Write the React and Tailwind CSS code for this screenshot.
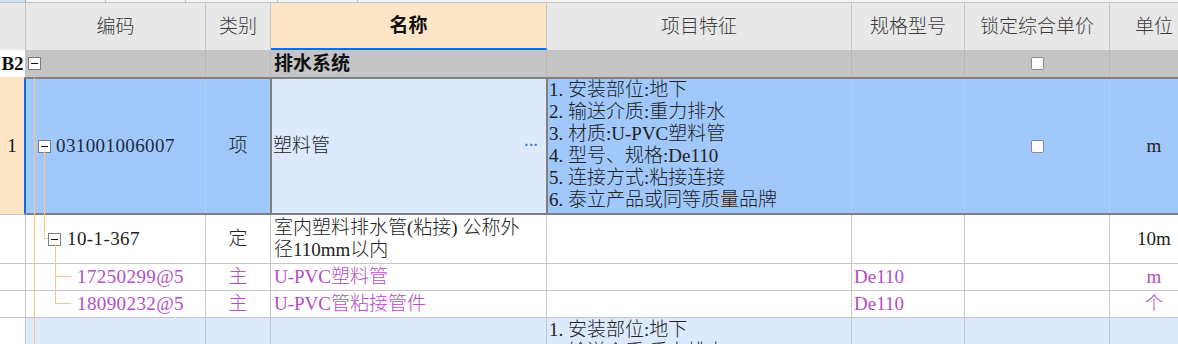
const Minus = () => (
  <span className="flex h-[13px] w-[13px] shrink-0 items-center justify-center border border-[#7c7c7c] bg-white">
    <span className="h-px w-[7px] bg-[#111]" />
  </span>
);

const Check = () => (
  <span className="block h-[13px] w-[13px] rounded-[2px] border border-[#8a8a8a] bg-white" />
);

export default function App() {
  return (
    <div className="relative h-[344px] w-[1178px] overflow-hidden bg-white text-[19px] font-light leading-[22px] text-[#222] font-[family-name:'Liberation_Serif','Noto_Sans_CJK_SC',serif]">
      {/* top strip */}
      <div className="flex h-[3px] border-b border-[#c4c4c4] bg-[#f3f3f3]">
        <div className="w-[26px] border-r border-[#9a9a9a] bg-[#cfe2fa]" />
        <div className="w-[80px] border-r border-[#b8b8b8]" />
        <div className="w-[80px] border-r border-[#b8b8b8]" />
        <div className="w-[92px] border-r border-[#b8b8b8]" />
        <div className="w-[80px] border-r border-[#b8b8b8]" />
      </div>

      {/* header */}
      <div className="flex h-[47px] bg-[#e8e8e8] text-[#3c3c3c]">
        <div className="w-[26px] shrink-0 border-r border-[#c6c6c6]" />
        <div className="flex w-[180px] shrink-0 items-center justify-center border-r border-[#c6c6c6]">编码</div>
        <div className="flex w-[65px] shrink-0 items-center justify-center border-r border-[#c6c6c6]">类别</div>
        <div className="flex w-[276px] shrink-0 items-center justify-center border-r border-b-2 border-r-[#c6c6c6] border-b-[#1169f0] bg-[#fde6c8] font-bold text-[#111]">名称</div>
        <div className="flex w-[305px] shrink-0 items-center justify-center border-r border-[#c6c6c6]">项目特征</div>
        <div className="flex w-[113px] shrink-0 items-center justify-center border-r border-[#c6c6c6]">规格型号</div>
        <div className="flex w-[145px] shrink-0 items-center justify-center border-r border-[#c6c6c6]">锁定综合单价</div>
        <div className="flex w-[88px] shrink-0 items-center justify-center">单位</div>
      </div>

      {/* group row */}
      <div className="flex h-[27px] bg-[#c4c4c4]">
        <div className="flex w-[26px] shrink-0 items-center justify-center border-r border-[#c6c6c6] bg-white font-bold text-[#111]">B2</div>
        <div className="flex w-[180px] shrink-0 items-center border-r border-[#b9b9b9] pl-[2px]"><Minus /></div>
        <div className="w-[65px] shrink-0 border-r border-[#b9b9b9]" />
        <div className="flex w-[276px] shrink-0 items-center border-r border-[#b9b9b9] pl-[3px] font-bold text-[#111]">排水系统</div>
        <div className="w-[305px] shrink-0 border-r border-[#b9b9b9]" />
        <div className="w-[113px] shrink-0 border-r border-[#b9b9b9]" />
        <div className="flex w-[145px] shrink-0 items-center justify-center border-r border-[#b9b9b9]"><Check /></div>
        <div className="w-[88px] shrink-0" />
      </div>

      {/* row 1 (selected) */}
      <div className="flex h-[138px]">
        <div className="flex w-[24px] shrink-0 items-center justify-center border-b border-[#c6c6c6] bg-[#fde6c8] text-[#111]">1</div>
        <div className="flex border-y-2 border-[#808080] bg-[#a0c8fb]">
          <div className="flex w-[182px] shrink-0 items-center gap-[5px] border-r border-l-2 border-r-[#b7cbe6] border-l-[#1169f0] pl-[12px] text-[#1e2a3c]">
            <Minus />
            <span className="tracking-[0.4px]">031001006007</span>
          </div>
          <div className="flex w-[64px] shrink-0 items-center justify-center">项</div>
          <div className="flex w-[278px] shrink-0 items-center justify-between border-x-2 border-[#808080] bg-[#dde9fd] pl-[1px] pr-[8px]">
            <span>塑料管</span>
            <span className="text-[14px] font-bold text-[#3a7bd5]">···</span>
          </div>
          <div className="w-[304px] shrink-0 border-r border-[#b7cbe6] pl-[1px]">
            <div>1. 安装部位:地下</div>
            <div>2. 输送介质:重力排水</div>
            <div>3. 材质:U-PVC塑料管</div>
            <div>4. 型号、规格:De110</div>
            <div>5. 连接方式:粘接连接</div>
            <div>6. 泰立产品或同等质量品牌</div>
          </div>
          <div className="w-[113px] shrink-0 border-r border-[#b7cbe6]" />
          <div className="flex w-[145px] shrink-0 items-center justify-center border-r border-[#b7cbe6]"><Check /></div>
          <div className="flex w-[88px] shrink-0 items-center justify-center">m</div>
        </div>
      </div>

      {/* row 2 */}
      <div className="flex h-[49px] border-b border-[#c6c6c6]">
        <div className="w-[26px] shrink-0 border-r border-[#c6c6c6]" />
        <div className="flex w-[180px] shrink-0 items-center gap-[6px] border-r border-[#c6c6c6] pl-[22px]">
          <Minus />
          <span className="tracking-[0.4px]">10-1-367</span>
        </div>
        <div className="flex w-[65px] shrink-0 items-center justify-center border-r border-[#c6c6c6]">定</div>
        <div className="flex w-[276px] shrink-0 flex-col justify-center border-r border-[#c6c6c6] pl-[3px]">
          <div>室内塑料排水管(粘接) 公称外</div>
          <div>径110mm以内</div>
        </div>
        <div className="w-[305px] shrink-0 border-r border-[#c6c6c6]" />
        <div className="w-[113px] shrink-0 border-r border-[#c6c6c6]" />
        <div className="w-[145px] shrink-0 border-r border-[#c6c6c6]" />
        <div className="flex w-[88px] shrink-0 items-center justify-center">10m</div>
      </div>

      {/* resource rows */}
      {[
        ['17250299@5', 'U-PVC塑料管', 'm'],
        ['18090232@5', 'U-PVC管粘接管件', '个'],
      ].map(([code, name, unit]) => (
        <div key={code} className="flex h-[27px] border-b border-[#c6c6c6] text-[#b64cc6]">
          <div className="w-[26px] shrink-0 border-r border-[#c6c6c6]" />
          <div className="flex w-[180px] shrink-0 items-center border-r border-[#c6c6c6] pl-[51px] tracking-[0.4px]">{code}</div>
          <div className="flex w-[65px] shrink-0 items-center justify-center border-r border-[#c6c6c6]">主</div>
          <div className="flex w-[276px] shrink-0 items-center border-r border-[#c6c6c6] pl-[3px]">{name}</div>
          <div className="w-[305px] shrink-0 border-r border-[#c6c6c6]" />
          <div className="flex w-[113px] shrink-0 items-center border-r border-[#c6c6c6] pl-[2px]">De110</div>
          <div className="w-[145px] shrink-0 border-r border-[#c6c6c6]" />
          <div className="flex w-[88px] shrink-0 items-center justify-center">{unit}</div>
        </div>
      ))}

      {/* next item (partly visible) */}
      <div className="flex h-[60px]">
        <div className="w-[26px] shrink-0 border-r border-[#c6c6c6] bg-white" />
        <div className="flex bg-[#dde9fc]">
          <div className="w-[180px] shrink-0 border-r border-[#c6c6c6]" />
          <div className="w-[65px] shrink-0 border-r border-[#c6c6c6]" />
          <div className="w-[276px] shrink-0 border-r border-[#c6c6c6]" />
          <div className="w-[305px] shrink-0 border-r border-[#c6c6c6] pl-[2px] pt-[1px]">
            <div>1. 安装部位:地下</div>
            <div>2. 输送介质:重力排水</div>
          </div>
          <div className="w-[113px] shrink-0 border-r border-[#c6c6c6]" />
          <div className="w-[145px] shrink-0 border-r border-[#c6c6c6]" />
          <div className="w-[88px] shrink-0" />
        </div>
      </div>

      {/* tree connector lines */}
      <svg className="pointer-events-none absolute left-0 top-0" width="80" height="344">
        <g stroke="#ffc47c" strokeWidth="1" fill="none" shapeRendering="crispEdges">
          <path d="M34.5 78V344" />
          <path d="M34 145.5H38" />
          <path d="M44.5 152V238.5H48" />
          <path d="M55.5 245V303.5H71" />
          <path d="M55 276.5H71" />
        </g>
      </svg>
    </div>
  );
}
